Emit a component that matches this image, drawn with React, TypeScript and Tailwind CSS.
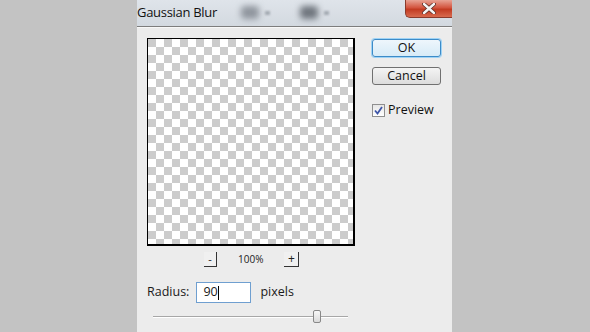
import React from "react";

export default function App() {
  const font = { fontFamily: '"Open Sans", "Noto Sans", "DejaVu Sans", sans-serif' };
  return (
    <div className="w-[590px] h-[332px] bg-[#c3c3c3] flex overflow-hidden" style={font}>
      <div className="ml-[137px] w-[315px] h-full flex flex-col bg-[#ececec]">
        {/* Title bar */}
        <div className="h-[27px] flex items-start bg-[linear-gradient(#dfe4ea,#d3d9e0)] border-b border-[#7d7d7d] relative shrink-0">
          <div className="pt-[4px] text-[13px] text-[#111] leading-[16px] tracking-[-0.3px]">Gaussian Blur</div>
          <div className="ml-[24px] mt-[6px] w-[18px] h-[13px] bg-[#8f959d] blur-[3px] rounded" />
          <div className="ml-[6px] mt-[11px] w-[5px] h-[4px] bg-[#a4aab2] blur-[1px]" />
          <div className="ml-[30px] mt-[6px] w-[18px] h-[13px] bg-[#6f757d] blur-[3px] rounded" />
          <div className="ml-[6px] mt-[11px] w-[5px] h-[4px] bg-[#a4aab2] blur-[1px]" />
          <div className="ml-auto w-[47px] h-[18px] rounded-bl-[5px] bg-[linear-gradient(#e8a394,#d3553f_45%,#c23b22_55%,#d86a4e)] border border-[#8a3b2c] border-t-0 border-r-0 flex items-center justify-center">
            <svg width="14" height="11" viewBox="0 0 14 11">
              <path d="M2 1 L12 10 M12 1 L2 10" stroke="#5a2a22" strokeWidth="4" strokeLinecap="round" />
              <path d="M2 1 L12 10 M12 1 L2 10" stroke="#f4f4f4" strokeWidth="2.4" strokeLinecap="round" />
            </svg>
          </div>
        </div>
        <div className="h-px bg-[#f8f8f8]" />
        {/* Body */}
        <div className="flex pl-[10px] pt-[10px]">
          <div className="flex flex-col">
            <div className="w-[208px] h-[208px] border-l border-t border-r-2 border-b-2 border-black bg-[conic-gradient(#fff_25%,#cccccc_0_50%,#fff_0_75%,#cccccc_0)] bg-[length:16px_16px]" />
            <div className="flex items-center h-[16px] mt-[5px] text-[10px] text-[#222]">
              <div className="ml-[57px] w-[13px] h-[15px] border-r border-b border-[#333] bg-[#f0f0f0] flex items-center justify-center text-[11px] leading-none">-</div>
              <div className="ml-[21px] leading-none">100%</div>
              <div className="ml-[21px] w-[15px] h-[15px] border-r border-b border-[#333] bg-[#f0f0f0] flex items-center justify-center text-[12px] leading-none">+</div>
            </div>
            <div className="flex items-center mt-[15px] text-[12.5px] text-[#1a1a1a]">
              <span>Radius:</span>
              <div className="ml-[7px] w-[55px] h-[21px] bg-white border border-[#6f9fd0] flex items-center pl-[6px] leading-none">
                <span>90</span>
                <span className="w-px h-[14px] bg-black" />
              </div>
              <span className="ml-[9px]">pixels</span>
            </div>
            <div className="relative mt-[13px] ml-[6px] w-[195px] h-[4px]">
              <div className="h-px bg-[#a7a7a7]" />
              <div className="h-px bg-white" />
              <div className="absolute left-[160px] top-[-6px] w-[8px] h-[13px] rounded-[2px] border border-[#888] bg-[linear-gradient(#f8f8f8,#d9d9d9)]" />
            </div>
          </div>
          <div className="flex flex-col ml-[17px] pt-[1px] text-[12.5px] text-[#111]">
            <div className="w-[69px] h-[18px] rounded-[3px] border border-[#3c8bc8] shadow-[0_0_0_1px_#9fd3f5] bg-[linear-gradient(#eef6fc,#d7ebf7)] flex items-center justify-center leading-none">OK</div>
            <div className="mt-[10px] w-[69px] h-[18px] rounded-[3px] border border-[#707070] bg-[linear-gradient(#f4f4f4,#dcdcdc)] flex items-center justify-center leading-none">Cancel</div>
            <div className="mt-[19px] flex items-center">
              <div className="w-[13px] h-[13px] border border-[#8f8f8f] bg-[linear-gradient(#e6e6e6,#ffffff)] flex items-center justify-center">
                <svg width="9" height="9" viewBox="0 0 9 9">
                  <path d="M1 4.5 L3.5 7.5 L8 1" stroke="#3d55a8" strokeWidth="1.8" fill="none" />
                </svg>
              </div>
              <span className="ml-[3px] leading-none">Preview</span>
            </div>
          </div>
        </div>
      </div>
    </div>
  );
}
